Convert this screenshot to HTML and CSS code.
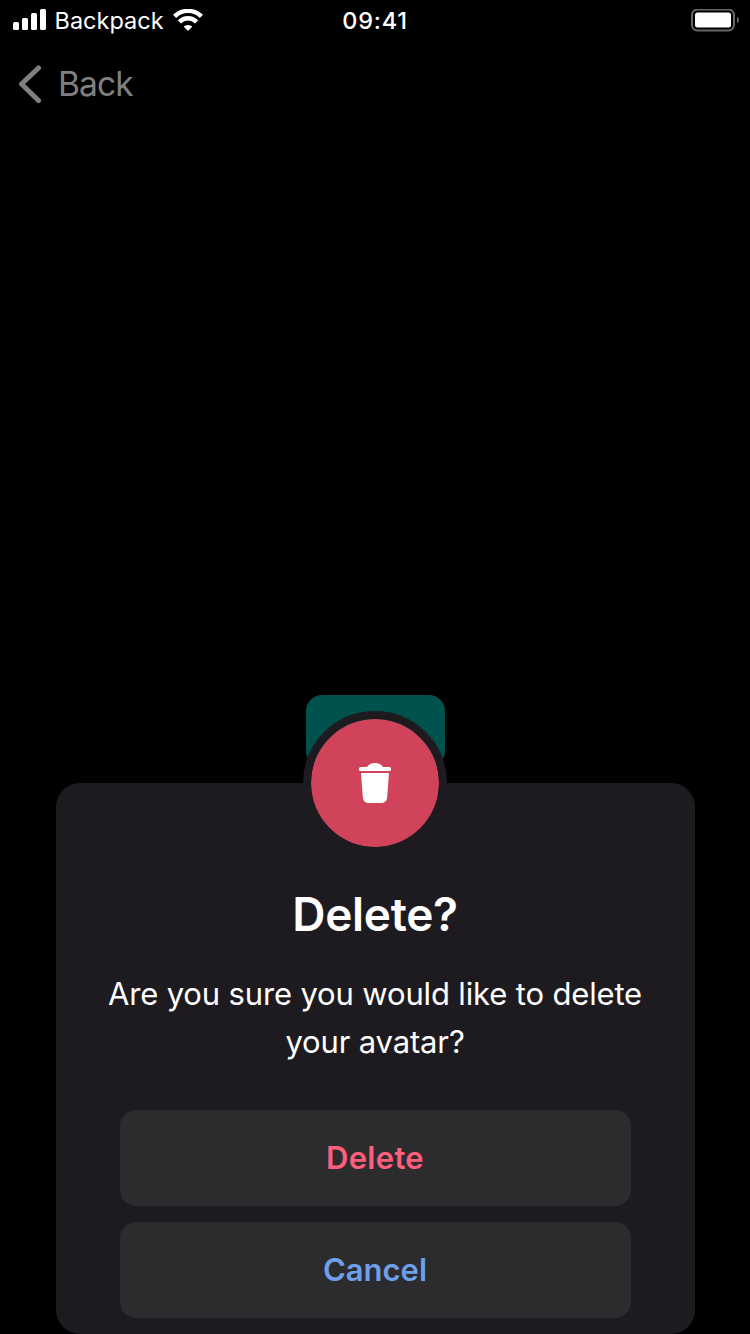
FILE: index.html
```html
<!DOCTYPE html>
<html lang="en">
<head>
<meta charset="utf-8">
<title>Delete dialog</title>
<link rel="stylesheet" href="styles.css">
</head>
<body>
<div class="screen">
  <header class="status">
    <div class="status-left">
      <svg class="signal" width="34" height="22" viewBox="0 0 34 22" fill="#fff"><rect x="0" y="13" width="6" height="8" rx="1.5"/><rect x="9" y="9" width="6" height="12" rx="1.5"/><rect x="18" y="4" width="6" height="17" rx="1.5"/><rect x="27" y="0" width="6" height="21" rx="1.5"/></svg>
      <span class="carrier">Backpack</span>
      <svg class="wifi" width="30" height="22" viewBox="0 0 30 22"><g fill="none" stroke="#fff" stroke-width="4.400"><path d="M1.600 7.400a19 19 0 0 1 26.800 0"/><path d="M6.400 12.900a12 12 0 0 1 17.200 0"/></g><path d="M10.600 17.600a6.500 6.500 0 0 1 8.800 0L15 22z" fill="#fff"/></svg>
    </div>
    <span class="time">09:41</span>
    <div class="status-right">
      <svg width="48" height="24" viewBox="0 0 48 24"><rect x="1" y="0.500" width="42" height="21" rx="5.500" fill="none" stroke="#666" stroke-width="2"/><rect x="4" y="3.500" width="36" height="15" rx="2.500" fill="#fff"/><path d="M46 7.500v7q2-1 2-3.500T46 7.500z" fill="#666"/></svg>
    </div>
  </header>
  <nav class="nav">
    <svg width="24" height="40" viewBox="0 0 24 40"><path d="M20.500 4L3.500 20L20.500 36.500" fill="none" stroke="#808080" stroke-width="5" stroke-linecap="round" stroke-linejoin="round"/></svg>
    <span class="back">Back</span>
  </nav>
  <main class="content">
    <div class="trigger"></div>
    <section class="dialog">
      <div class="badge"><svg width="32" height="40" viewBox="0 0 32 40" fill="#fff"><path d="M1.600 4H8Q10.500 0 16 0T24 4h6.400a1.600 1.600 0 0 1 1.600 1.600v.8A1.600 1.600 0 0 1 30.400 8H1.600A1.600 1.600 0 0 1 0 6.400v-.8A1.600 1.600 0 0 1 1.600 4z"/><path d="M2.900 10H29.100q.9 0 .8 1L28.200 34Q27.700 40 22 40H10Q4.300 40 3.800 34L2.100 11Q2 10 2.900 10z"/></svg></div>
      <h1 class="title">Delete?</h1>
      <p class="message">Are you sure you would like to delete<br>your avatar?</p>
      <div class="actions">
        <div class="button danger"><span>Delete</span></div>
        <div class="button cancel"><span>Cancel</span></div>
      </div>
    </section>
  </main>
</div>
</body>
</html>
```
FILE: styles.css
```css
* { box-sizing: border-box; }
body { margin: 0; background: #000; font-family: Inter, "Liberation Sans", sans-serif; color: #fff; }
.screen { width: 750px; height: 1334px; overflow: hidden; display: flex; flex-direction: column; }
.status { height: 40px; display: grid; grid-template-columns: 1fr auto 1fr; align-items: center; padding: 0 11px 0 13px; line-height: 40px; }
.status svg, .nav svg, .badge svg { display: block; }
.status-left { display: flex; align-items: center; }
.signal { margin-top: -2px; }
.wifi { margin-top: -1px; }
.carrier { font-size: 23.500px; letter-spacing: 0; margin: 1px 9.500px 0 7.500px; }
.time { font-size: 23.500px; font-weight: 500; letter-spacing: 0.8px; padding: 1px 2px 0 0; }
.status-right { display: flex; justify-content: flex-end; }
.nav { height: 88px; display: flex; align-items: center; padding-left: 18px; gap: 16px; }
.back { font-size: 33.500px; color: #808080; letter-spacing: -0.9px; margin-top: -1px; }
.content { flex: 1; display: flex; flex-direction: column; align-items: center; padding-top: 567px; }
.trigger { flex: none; width: 139px; height: 72px; border-radius: 16px; background: #00524c; }
.dialog { flex: none; width: 639px; height: 551px; margin-top: 16px; border-radius: 24px; background: #1e1b20; display: flex; flex-direction: column; align-items: center; }
.badge { flex: none; width: 144px; height: 144px; margin-top: -72px; border: 8px solid #1e1b20; border-radius: 50%; background: #d1435b; background-clip: padding-box; display: flex; align-items: center; justify-content: center; }
.title { margin: 31px 0 0; font-size: 46px; line-height: 56px; font-weight: 600; letter-spacing: -0.3px; }
.message { margin: 28px 0 0; font-size: 31px; line-height: 48px; text-align: center; white-space: nowrap; letter-spacing: -0.15px; }
.actions { width: 511px; margin-top: 44px; display: flex; flex-direction: column; gap: 16px; }
.button { height: 96px; padding-bottom: 2px; border-radius: 16px; background: #2c2c2e; display: flex; align-items: center; justify-content: center; font-size: 31px; font-weight: 600; }
.danger { color: #ff5e7c; letter-spacing: 0.3px; }
.cancel { color: #6d9feb; }
```
